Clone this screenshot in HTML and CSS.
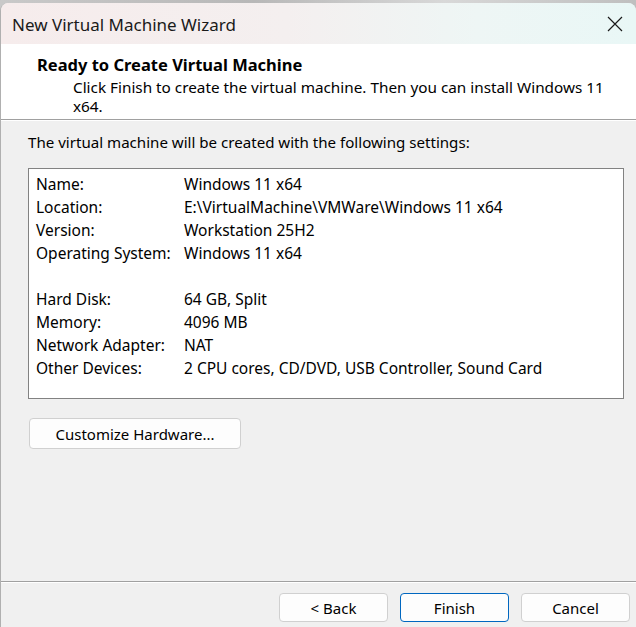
FILE: index.html
```html
<!DOCTYPE html>
<html>
<head>
<meta charset="utf-8">
<link rel="stylesheet" href="styles.css">
</head>
<body>
<div class="window">
  <div class="titlebar">
    <span class="title">New Virtual Machine Wizard</span>
    <span class="close">
      <svg width="16" height="16" viewBox="0 0 16 16"><path d="M1 1 L15 15 M15 1 L1 15" stroke="#1a1a1a" stroke-width="1.2" fill="none"/></svg>
    </span>
  </div>
  <div class="header">
    <div class="heading">Ready to Create Virtual Machine</div>
    <div class="sub">Click Finish to create the virtual machine. Then you can install Windows 11 x64.</div>
  </div>
  <div class="body">
    <div class="intro">The virtual machine will be created with the following settings:</div>
    <div class="box">
      <div class="row"><span class="k">Name:</span><span class="v">Windows 11 x64</span></div>
      <div class="row"><span class="k">Location:</span><span class="v">E:\VirtualMachine\VMWare\Windows 11 x64</span></div>
      <div class="row"><span class="k">Version:</span><span class="v">Workstation 25H2</span></div>
      <div class="row"><span class="k">Operating System:</span><span class="v">Windows 11 x64</span></div>
      <div class="row"></div>
      <div class="row"><span class="k">Hard Disk:</span><span class="v">64 GB, Split</span></div>
      <div class="row"><span class="k">Memory:</span><span class="v">4096 MB</span></div>
      <div class="row"><span class="k">Network Adapter:</span><span class="v">NAT</span></div>
      <div class="row"><span class="k">Other Devices:</span><span class="v">2 CPU cores, CD/DVD, USB Controller, Sound Card</span></div>
    </div>
    <div class="custom-wrap"><button class="btn custom">Customize Hardware...</button></div>
  </div>
  <div class="footer">
    <button class="btn">&lt; Back</button>
    <button class="btn primary">Finish</button>
    <button class="btn">Cancel</button>
  </div>
</div>
</body>
</html>
```
FILE: styles.css
```css
html, body {
  margin: 0;
  padding: 0;
  height: 100%;
}
body {
  background: linear-gradient(90deg, #c9c9c9, #b8b8b8 40%, #d8d8d8 70%, #bfbfbf);
  font-family: "Noto Sans", "Open Sans", sans-serif;
  color: #000;
  overflow: hidden;
}
.window {
  margin-top: 3px;
  height: 624px;
  border-left: 1px solid #b0b0b0;
  border-top-left-radius: 8px;
  border-top-right-radius: 8px;
  background: #f0f0f0;
  display: flex;
  flex-direction: column;
  overflow: hidden;
}
.titlebar {
  height: 41px;
  flex: none;
  display: flex;
  align-items: center;
  justify-content: space-between;
  background: linear-gradient(90deg, #f6ecec 0%, #f4efef 45%, #eef6f5 75%, #e9f7f6 100%);
  padding-left: 11px;
  padding-right: 13px;
}
.title {
  font-size: 17px;
  color: #1a1a1a;
  padding-top: 1px;
}
.close {
  display: flex;
  width: 16px;
  height: 16px;
}
.header {
  flex: none;
  background: #fff;
  height: 76px;
  border-bottom: 1px solid #a0a0a0;
  box-shadow: 0 1px 0 #ffffff;
  padding: 9px 20px 0 36px;
  box-sizing: border-box;
}
.heading {
  font-weight: bold;
  font-size: 16.5px;
  line-height: 23px;
}
.sub {
  font-size: 15.3px;
  line-height: 19px;
  padding-left: 36px;
  padding-right: 10px;
  margin-top: 2px;
}
.body {
  flex: 1;
  padding: 12px 12px 0 27px;
  border-bottom: 1px solid #a0a0a0;
  box-shadow: 0 1px 0 #ffffff;
}
.intro {
  font-size: 15.1px;
  line-height: 20px;
}
.box {
  margin-top: 16px;
  background: #fff;
  border: 1px solid #828282;
  height: 225px;
  padding: 4px 8px 0 7px;
}
.row {
  display: flex;
  height: 23px;
  line-height: 23px;
  font-size: 15.5px;
}
.k {
  width: 148px;
  flex: none;
}
.custom-wrap {
  margin-top: 19px;
}
.btn {
  font-family: inherit;
  font-size: 15px;
  color: #000;
  background: #fdfdfd;
  border: 1px solid #d0d0d0;
  border-radius: 4px;
  height: 31px;
  padding: 0;
}
.custom {
  width: 212px;
  margin-left: 1px;
}
.footer {
  flex: none;
  height: 45px;
  display: flex;
  justify-content: flex-end;
  align-items: flex-start;
  gap: 12px;
  padding: 11px 6px 0 0;
  box-sizing: border-box;
}
.footer .btn {
  width: 109px;
  height: 29px;
}
.footer .primary {
  border-color: #0067c0;
}
```
